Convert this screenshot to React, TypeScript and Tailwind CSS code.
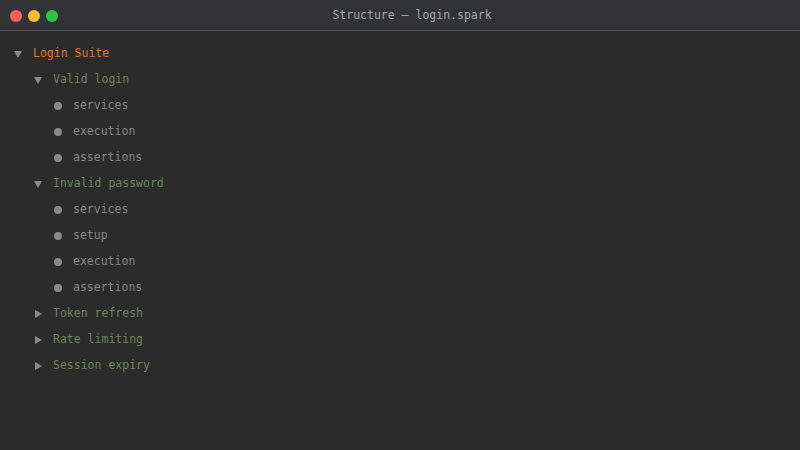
import React from "react";

type Node = {
  label: string;
  level: 0 | 1 | 2;
  kind: "open" | "closed" | "leaf";
};

const tree: Node[] = [
  { label: "Login Suite", level: 0, kind: "open" },
  { label: "Valid login", level: 1, kind: "open" },
  { label: "services", level: 2, kind: "leaf" },
  { label: "execution", level: 2, kind: "leaf" },
  { label: "assertions", level: 2, kind: "leaf" },
  { label: "Invalid password", level: 1, kind: "open" },
  { label: "services", level: 2, kind: "leaf" },
  { label: "setup", level: 2, kind: "leaf" },
  { label: "execution", level: 2, kind: "leaf" },
  { label: "assertions", level: 2, kind: "leaf" },
  { label: "Token refresh", level: 1, kind: "closed" },
  { label: "Rate limiting", level: 1, kind: "closed" },
  { label: "Session expiry", level: 1, kind: "closed" },
];

const indent = ["pl-[12px]", "pl-[32px]", "pl-[52px]"];
const tone = ["text-[#e0742a]", "text-[#6a8759]", "text-[#878787]"];

function Marker({ kind }: { kind: Node["kind"] }) {
  if (kind === "leaf") {
    return <span className="size-[8px] rounded-full bg-[#8a8a8a]" />;
  }
  if (kind === "open") {
    return (
      <svg width="8" height="7" viewBox="0 0 8 7" aria-hidden="true">
        <path d="M0 0h8L4 7z" fill="#8a8a8a" />
      </svg>
    );
  }
  return (
    <svg width="7" height="8" viewBox="0 0 7 8" aria-hidden="true">
      <path d="M0 0l7 4-7 4z" fill="#8a8a8a" />
    </svg>
  );
}

export default function App() {
  return (
    <div className="flex h-[450px] w-[800px] flex-col bg-[#2b2b2b] font-['DejaVu_Sans_Mono',monospace] text-[11.5px]">
      <div className="relative flex h-[31px] items-center justify-center border-b border-[#4a4d50] bg-[#313437] pt-[2px]">
        <div className="absolute left-[10px] top-[10px] flex gap-[6px]">
          <span className="size-[12px] rounded-full bg-[#ff5f57]" />
          <span className="size-[12px] rounded-full bg-[#febc2e]" />
          <span className="size-[12px] rounded-full bg-[#28c840]" />
        </div>
        <span className="ml-[24px] text-[#a6a8aa]">Structure — login.spark</span>
      </div>
      <div className="flex flex-col pt-[10px]">
        {tree.map((n, i) => (
          <div key={i} className={`flex h-[26px] items-center ${indent[n.level]}`}>
            <span className="flex w-[12px] items-center justify-center">
              <Marker kind={n.kind} />
            </span>
            <span className={`ml-[9px] ${tone[n.level]}`}>{n.label}</span>
          </div>
        ))}
      </div>
    </div>
  );
}
